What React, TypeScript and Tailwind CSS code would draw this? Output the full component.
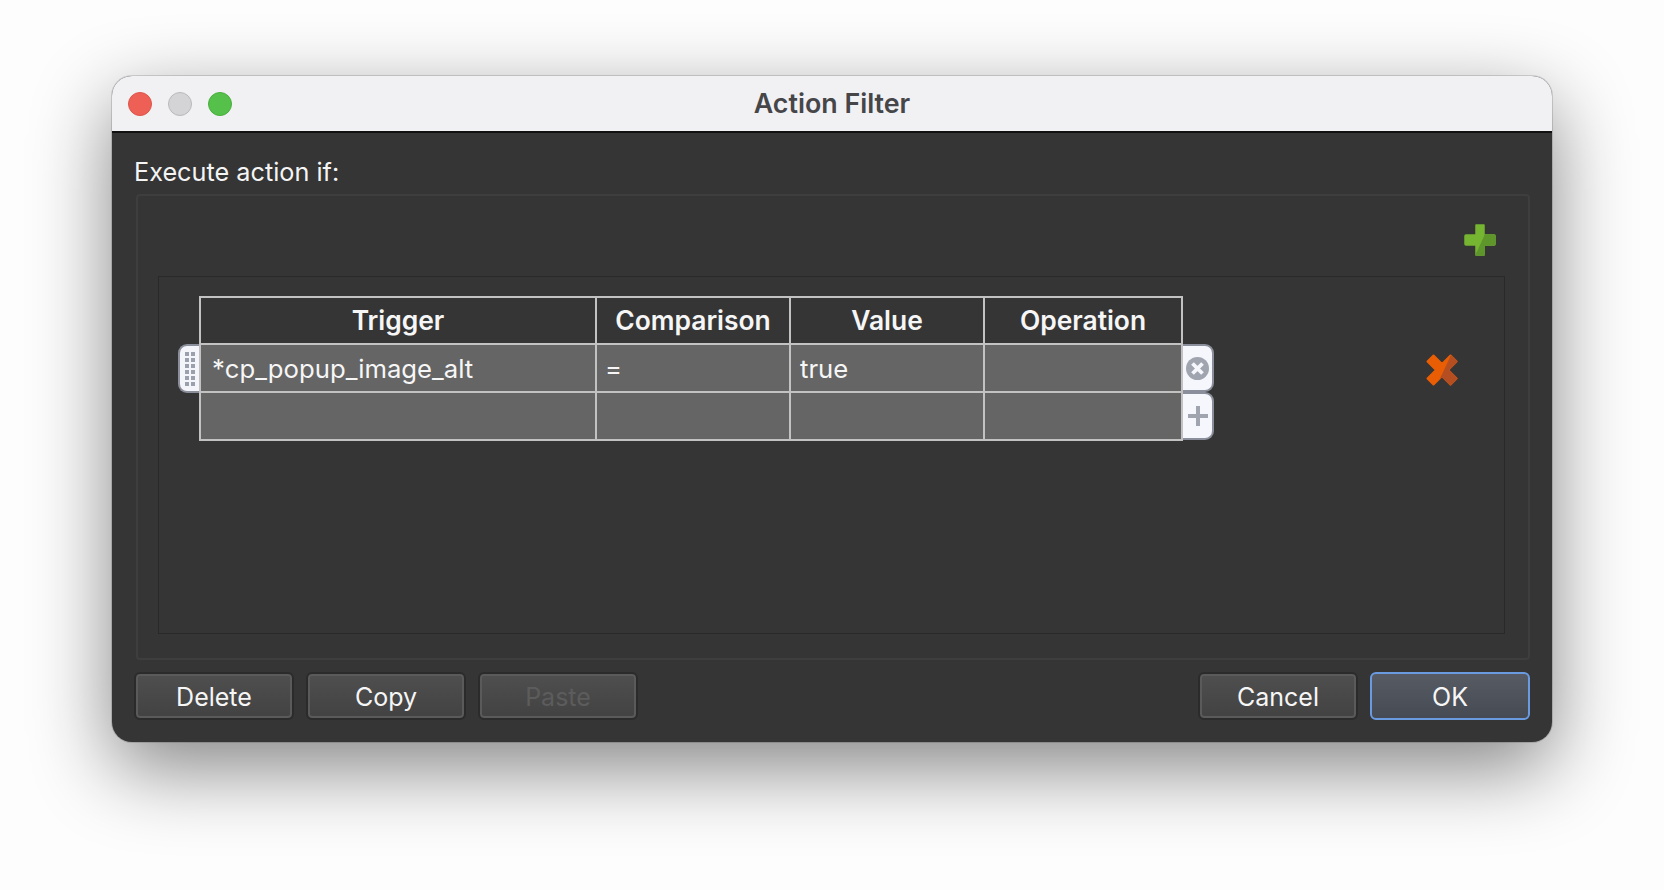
const columns = [
  { label: "Trigger", width: "w-[396px]" },
  { label: "Comparison", width: "w-[194px]" },
  { label: "Value", width: "w-[194px]" },
  { label: "Operation", width: "w-[198px]" },
]

const rows = [
  ["*cp_popup_image_alt", "=", "true", ""],
  ["", "", "", ""],
]

const plusShape = "M12 1h8v10h10a1 1 0 0 1 1 1v8a1 1 0 0 1-1 1H20v10h-8V21H2a1 1 0 0 1-1-1v-8a1 1 0 0 1 1-1h10z"
const crossShape = "M7.500 1.500 16 10l8.500-8.500 6 6L22 16l8.500 8.500-6 6L16 22l-8.500 8.500-6-6L10 16 1.500 7.500z"

const GreenPlus = () => (
  <svg width="32" height="32" viewBox="0 0 32 32">
    <defs>
      <clipPath id="plus-shade">
        <polygon points="21,10 32,0 32,32 11,32" />
      </clipPath>
    </defs>
    <path d={plusShape} fill="#76b531" stroke="#76b531" strokeWidth="1.500" strokeLinejoin="round" />
    <path d={plusShape} fill="#5f962c" stroke="#5f962c" strokeWidth="1.500" strokeLinejoin="round" clipPath="url(#plus-shade)" />
  </svg>
)

const OrangeX = () => (
  <svg width="32" height="32" viewBox="0 0 32 32">
    <defs>
      <clipPath id="cross-shade">
        <polygon points="25.500,0 32,0 32,32 10.500,32" />
      </clipPath>
    </defs>
    <path d={crossShape} fill="#e95e04" stroke="#e95e04" strokeWidth="2" strokeLinejoin="round" />
    <path d={crossShape} fill="#b54f22" stroke="#b54f22" strokeWidth="2" strokeLinejoin="round" clipPath="url(#cross-shade)" />
  </svg>
)

const DragDots = () => (
  <svg width="10" height="34" viewBox="0 0 10 34" fill="#9ba0ad">
    {[0, 6, 12, 18, 24, 30].map((y) => (
      <g key={y}>
        <rect x="0" y={y} width="4" height="4" />
        <rect x="6" y={y} width="4" height="4" />
      </g>
    ))}
  </svg>
)

const RemoveIcon = () => (
  <svg width="23" height="23" viewBox="0 0 23 23">
    <circle cx="11.500" cy="11.500" r="11.500" fill="#a0a4af" />
    <path d="M6.500 6.500l10 10M16.500 6.500l-10 10" stroke="#f6f7fc" strokeWidth="3.800" />
  </svg>
)

const AddIcon = () => (
  <svg width="20" height="20" viewBox="0 0 20 20" fill="#a0a4af">
    <rect x="8" y="0" width="4" height="20" />
    <rect x="0" y="8" width="20" height="4" />
  </svg>
)

const Button = ({
  children,
  disabled,
  primary,
}: {
  children: string
  disabled?: boolean
  primary?: boolean
}) => (
  <button
    disabled={disabled}
    className={`h-[48px] w-[160px] rounded-[6px] border-2 pt-[3px] text-[25px] leading-none ${
      primary
        ? "border-[#6a9be0] bg-linear-to-b from-[#565b64] to-[#454a53] text-[#f6f6f6]"
        : "border-[#2b2b2b] bg-linear-to-b from-[#4f4f4f] to-[#424242] text-[#f6f6f6] shadow-[inset_0_0_0_2px_#5a5a5a]"
    } ${disabled ? "text-[#5c5c5c]!" : ""}`}
  >
    {children}
  </button>
)

export default function App() {
  return (
    <div className="min-h-[890px] bg-[#fdfdfd] pl-[112px] pt-[76px] font-['Inter',sans-serif]">
      <div className="flex h-[666px] w-[1440px] flex-col overflow-hidden rounded-[20px] bg-[#353535] shadow-[0_0_0_1px_rgba(0,0,0,0.14),0_26px_80px_rgba(0,0,0,0.48)]">
        <div className="relative flex h-[57px] shrink-0 items-center justify-center border-b-2 border-[#111111] bg-[#f1f1f4]">
          <div className="absolute left-[16px] top-[16px] flex gap-[16px]">
            <span className="size-[24px] rounded-full border border-[#dd5449] bg-[#ee6055]" />
            <span className="size-[24px] rounded-full border border-[#b9b9bc] bg-[#d4d4d7]" />
            <span className="size-[24px] rounded-full border border-[#49ae3d] bg-[#55c04a]" />
          </div>
          <span className="text-[26.800px] font-semibold text-[#464649]">Action Filter</span>
        </div>

        <div className="flex flex-1 flex-col pl-[22px] pr-[22px]">
          <p className="mt-[24px] h-[37px] text-[25.250px] leading-[30px] text-[#f4f4f4]">Execute action if:</p>

          <div className="ml-[2px] flex h-[466px] flex-col rounded-[4px] border-2 border-[#3e3e3e] pl-[20px] pr-[23px]">
            <div className="flex h-[80px] shrink-0 items-end justify-end pb-[20px] pr-[9px]">
              <GreenPlus />
            </div>

            <div className="flex h-[358px] items-start border border-[#292929] pl-[19px] pt-[19px]">
              <div className="w-[21px] shrink-0 pt-[48px]">
                <div className="flex h-[49px] items-center justify-center rounded-l-[9px] border-y-2 border-l-2 border-[#8b8f9b] bg-[#f4f5fb]">
                  <DragDots />
                </div>
              </div>

              <table className="shrink-0 table-fixed border-collapse text-[25.700px] text-[#f6f6f6]">
                <thead>
                  <tr className="h-[47px]">
                    {columns.map((column) => (
                      <th key={column.label} className={`${column.width} border-2 border-[#c2c2c2] p-0 pt-px text-center text-[26.400px] font-semibold`}>
                        {column.label}
                      </th>
                    ))}
                  </tr>
                </thead>
                <tbody>
                  {rows.map((row, i) => (
                    <tr key={i} className="h-[48px] bg-[#656565]">
                      {row.map((cell, j) => (
                        <td key={j} className="border-2 border-[#c2c2c2] pb-0 pl-[10px] pr-[9px] pt-[3px] first:pl-[11px] [&:nth-child(2)]:pl-[8px] [&:nth-child(3)]:pl-[9px]">
                          {cell}
                        </td>
                      ))}
                    </tr>
                  ))}
                </tbody>
              </table>

              <div className="w-[31px] shrink-0 pt-[48px]">
                <div className="flex h-[48px] items-center justify-center rounded-r-[9px] border-y-2 border-r-2 border-[#8b8f9b] bg-[#f6f7fc]">
                  <RemoveIcon />
                </div>
                <div className="flex h-[48px] items-center justify-center rounded-r-[9px] border-y-2 border-r-2 border-[#8b8f9b] bg-[#f6f7fc]">
                  <AddIcon />
                </div>
              </div>

              <div className="ml-auto mr-[46px] mt-[58px] shrink-0">
                <OrangeX />
              </div>
            </div>
          </div>

          <div className="mt-[12px] flex">
            <div className="flex gap-[12px]">
              <Button>Delete</Button>
              <Button>Copy</Button>
              <Button disabled>Paste</Button>
            </div>
            <div className="ml-auto flex gap-[12px]">
              <Button>Cancel</Button>
              <Button primary>OK</Button>
            </div>
          </div>
        </div>
      </div>
    </div>
  )
}
